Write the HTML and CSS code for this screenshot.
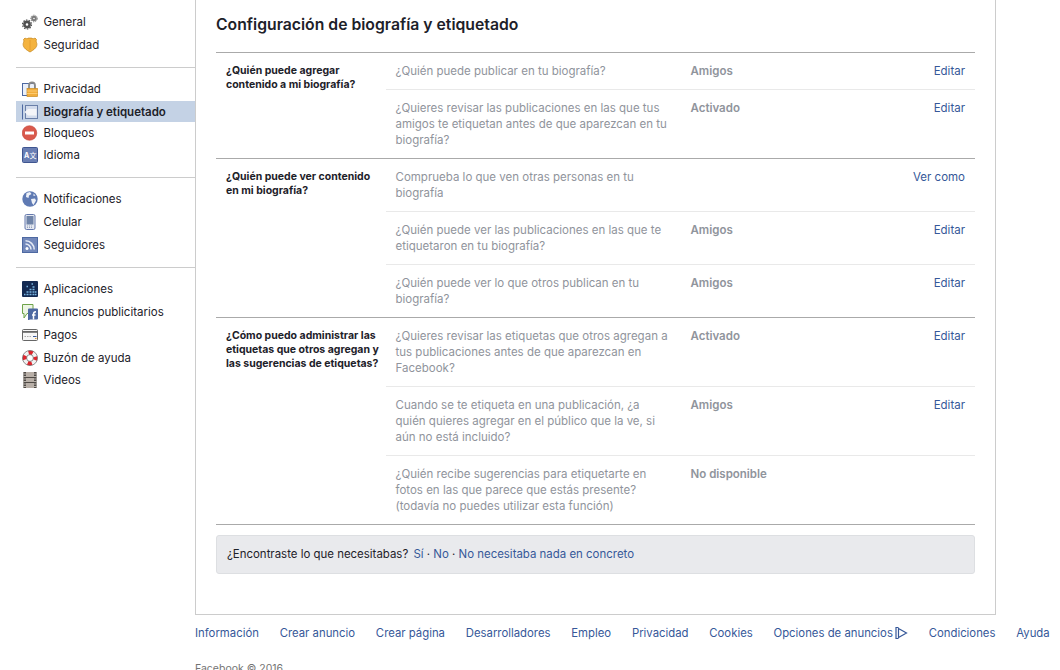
FILE: index.html
```html
<!DOCTYPE html>
<html lang="es">
<head>
<meta charset="utf-8">
<title>Configuración de biografía y etiquetado</title>
<link rel="stylesheet" href="styles.css">
</head>
<body>
<div class="page">
  <div class="layout">
    <nav class="side">
      <ul class="group first">
        <li class="item"><svg class="ic" viewBox="0 0 16 16"><circle cx="5" cy="10.500" r="2.600" fill="none" stroke="#4f4f4f" stroke-width="2.600"/><circle cx="5" cy="10.500" r="4.500" fill="none" stroke="#4f4f4f" stroke-width="1.200" stroke-dasharray="1.500 1.300"/><circle cx="12" cy="4.500" r="1.800" fill="none" stroke="#7b7b7b" stroke-width="2"/><circle cx="12" cy="4.500" r="3.300" fill="none" stroke="#7b7b7b" stroke-width="1" stroke-dasharray="1.300 1.100"/></svg><span>General</span></li>
        <li class="item"><svg class="ic" viewBox="0 0 16 16"><path d="M3 1c1 .8 2 .8 3 .3.800-.4 1.500-.4 2 0 .5-.4 1.200-.4 2 0 1 .5 2 .5 3-.3l1.500 1.500c-.5 1-.5 2 0 3 .5 1.200.5 2.500 0 3.700-.8 2.200-3 3.800-6.500 5.800-3.500-2-5.700-3.600-6.500-5.800-.5-1.200-.5-2.500 0-3.700.5-1 .5-2 0-3z" fill="#f4b33f" stroke="#c98a20" stroke-width=".8"/><path d="M8 3v10" stroke="#e7a232" stroke-width="1.200"/></svg><span>Seguridad</span></li>
      </ul>
      <ul class="group">
        <li class="item priv"><svg class="ic" viewBox="0 0 16 16"><rect x=".5" y="2.500" width="12" height="12" fill="#eaf0fa" stroke="#4e69a2"/><path d="M7 8V4.500a3 3 0 0 1 6 0V8" fill="none" stroke="#8a8a8a" stroke-width="1.800"/><rect x="5" y="7.500" width="10.500" height="8" fill="#f2ae3c" stroke="#c98a20" stroke-width=".7"/><path d="M5 10h10.500M5 12.500h10.500" stroke="#ffd27e" stroke-width=".8"/></svg><span>Privacidad</span></li>
        <li class="item sel active"><svg class="ic" viewBox="0 0 16 16"><path d="M.5 .5v15" stroke="#4e69a2"/><rect x="3.500" y="1.500" width="12" height="13" fill="#d3dcec" stroke="#6a7fa8"/><path d="M2.500 8 6 5h8.500v6.500H6z" fill="#f4f5f8"/></svg><span>Biografía y etiquetado</span></li>
        <li class="item blk"><svg class="ic" viewBox="0 0 16 16"><circle cx="7.500" cy="8" r="7.300" fill="#d9594c" stroke="#c4463a" stroke-width=".6"/><rect x="3" y="6.500" width="9" height="3" fill="#fff"/></svg><span>Bloqueos</span></li>
        <li class="item idm"><svg class="ic" viewBox="0 0 16 16"><rect x=".5" y=".5" width="15" height="15" rx="1" fill="#6a7eb3" stroke="#3f5590"/><text class="lang" x="2" y="10.500">A</text><text class="lang cjk" x="7.500" y="11">文</text></svg><span>Idioma</span></li>
      </ul>
      <ul class="group">
        <li class="item"><svg class="ic" viewBox="0 0 16 16"><circle cx="8" cy="8" r="7.700" fill="#5f7ab3"/><path d="M4.500 2 8 1l1.500 2-2.500 1.500-.5 2.500-2.500-1zM9 8l4-.5 1 2-2.500 4.500-1.500-2zM11.500 2.500l2 2-2 .5z" fill="#eef1f7"/></svg><span>Notificaciones</span></li>
        <li class="item"><svg class="ic" viewBox="0 0 16 16"><rect x="3" y=".5" width="10" height="15" rx="1.500" fill="#e4e8f0" stroke="#6478ad"/><rect x="4.500" y="2" width="7" height="8.500" fill="#6f84a8"/><path d="M5 12h6M5 13.500h6" stroke="#9aa5bd" stroke-dasharray="1 1"/></svg><span>Celular</span></li>
        <li class="item"><svg class="ic" viewBox="0 0 16 16"><rect x=".5" y=".5" width="15" height="15" fill="#7288ba" stroke="#4e69a2"/><circle cx="5" cy="11.500" r="1.500" fill="#fff"/><path d="M3.500 7a5.500 5.500 0 0 1 5.500 5.500M3.500 3.800a8.700 8.700 0 0 1 8.700 8.700" fill="none" stroke="#e6ebf5" stroke-width="1.500"/></svg><span>Seguidores</span></li>
      </ul>
      <ul class="group">
        <li class="item"><svg class="ic" viewBox="0 0 16 16"><rect width="16" height="16" rx="1" fill="#142a52"/><path d="M2 13.500h1.500M4.500 11h2M4.500 13.500h2M7.500 8.500h2M7.500 11h2M7.500 13.500h2M10.500 6h2M10.500 8.500h2M10.500 11h2M10.500 13.500h2M13 11h1.500M13 13.500h1.500M4.500 5.500h1.500M9.500 3h1.500" stroke="#79b4e0" stroke-width="1.500"/></svg><span>Aplicaciones</span></li>
        <li class="item"><svg class="ic" viewBox="0 0 16 16"><path d="M.5 .5h10.500v9h-6l-3 4.500v-4.500H.5z" fill="#edf5e4" stroke="#6ea34a"/><path d="M6 5.500a1 1 0 0 1 1-1h8a1 1 0 0 1 1 1v9a1 1 0 0 1-1 1H8l-2 1z" fill="#4e69a2"/><path d="M11.500 15.500V10c0-1.500.7-2.300 2.500-2.300M10 11h3.500" fill="none" stroke="#fff" stroke-width="1.500"/></svg><span>Anuncios publicitarios</span></li>
        <li class="item"><svg class="ic" viewBox="0 0 16 16"><rect x=".5" y="2.500" width="15" height="11" rx="1" fill="#f6f6f6" stroke="#666"/><rect x="1" y="4" width="14" height="1.800" fill="#666"/><path d="M2.500 9.500h7" stroke="#aaa" stroke-dasharray="1.500 1"/><path d="M11 9.500h3.500" stroke="#3b5998"/><path d="M13 11.500h1.500" stroke="#e0a030"/></svg><span>Pagos</span></li>
        <li class="item"><svg class="ic" viewBox="0 0 16 16"><circle cx="8" cy="8" r="5.400" fill="none" stroke="#f2f2f2" stroke-width="4"/><circle cx="8" cy="8" r="5.400" fill="none" stroke="#e0242c" stroke-width="4" stroke-dasharray="4.240 4.240" stroke-dashoffset="2.120"/><circle cx="8" cy="8" r="7.500" fill="none" stroke="#666" stroke-width=".7"/><circle cx="8" cy="8" r="3.400" fill="none" stroke="#666" stroke-width=".7"/></svg><span>Buzón de ayuda</span></li>
        <li class="item vid"><svg class="ic" viewBox="0 0 16 16"><rect x="1.500" y="0" width="13" height="16" fill="#b8afa7"/><rect x="1.500" y="0" width="2.500" height="16" fill="#4f4a46"/><rect x="12" y="0" width="2.500" height="16" fill="#4f4a46"/><path d="M4 5.500h8M4 10.500h8" stroke="#4f4a46"/><path d="M1.500 2H4M1.500 4.500H4M1.500 7H4M1.500 9.500H4M1.500 12H4M1.500 14.500H4M12 2h2.500M12 4.500h2.500M12 7h2.500M12 9.500h2.500M12 12h2.500M12 14.500h2.500" stroke="#d0cbc5" stroke-width=".8"/></svg><span>Videos</span></li>
      </ul>
    </nav>
    <main class="panel">
      <h1 class="title">Configuración de biografía y etiquetado</h1>
      <section class="sec">
        <h2 class="sec-head">¿Quién puede agregar contenido a mi biografía?</h2>
        <div class="rows">
          <div class="row"><div class="q">¿Quién puede publicar en tu biografía?</div><div class="val">Amigos</div><a class="act">Editar</a></div>
          <div class="row"><div class="q">¿Quieres revisar las publicaciones en las que tus amigos te etiquetan antes de que aparezcan en tu biografía?</div><div class="val">Activado</div><a class="act">Editar</a></div>
        </div>
      </section>
      <section class="sec">
        <h2 class="sec-head">¿Quién puede ver contenido en mi biografía?</h2>
        <div class="rows">
          <div class="row"><div class="q">Comprueba lo que ven otras personas en tu biografía</div><div class="val"></div><a class="act">Ver como</a></div>
          <div class="row"><div class="q">¿Quién puede ver las publicaciones en las que te etiquetaron en tu biografía?</div><div class="val">Amigos</div><a class="act">Editar</a></div>
          <div class="row"><div class="q">¿Quién puede ver lo que otros publican en tu biografía?</div><div class="val">Amigos</div><a class="act">Editar</a></div>
        </div>
      </section>
      <section class="sec">
        <h2 class="sec-head">¿Cómo puedo administrar las etiquetas que otros agregan y las sugerencias de etiquetas?</h2>
        <div class="rows">
          <div class="row"><div class="q">¿Quieres revisar las etiquetas que otros agregan a tus publicaciones antes de que aparezcan en Facebook?</div><div class="val">Activado</div><a class="act">Editar</a></div>
          <div class="row"><div class="q">Cuando se te etiqueta en una publicación, ¿a quién quieres agregar en el público que la ve, si aún no está incluido?</div><div class="val">Amigos</div><a class="act">Editar</a></div>
          <div class="row"><div class="q">¿Quién recibe sugerencias para etiquetarte en fotos en las que parece que estás presente? (todavía no puedes utilizar esta función)</div><div class="val">No disponible</div><a class="act"></a></div>
        </div>
      </section>
      <div class="feedback">¿Encontraste lo que necesitabas? <a class="fb-first">Sí</a> · <a>No</a> · <a>No necesitaba nada en concreto</a></div>
    </main>
  </div>
  <footer class="foot">
    <div class="links">
      <a>Información</a><a>Crear anuncio</a><a>Crear página</a><a>Desarrolladores</a><a>Empleo</a><a>Privacidad</a><a>Cookies</a>
      <a class="adc">Opciones de anuncios<svg class="adi" viewBox="0 0 13 12"><path d="M3.500.5H1v11h2.500" fill="none" stroke="#365899" stroke-width="1.200"/><path d="M3.500 1.500 11.500 6l-8 4.500z" fill="none" stroke="#365899" stroke-width="1.200"/></svg></a>
      <a>Condiciones</a><a>Ayuda</a>
    </div>
    <div class="copy">Facebook © 2016</div>
  </footer>
</div>
</body>
</html>
```
FILE: styles.css
```css
* { box-sizing: border-box; }
html, body { margin: 0; padding: 0; height: 670px; overflow: hidden; background: #fff; }
body { font-family: Inter, "Liberation Sans", sans-serif; font-size: 11.5px; line-height: 16px; color: #1d2129; }
.page { width: 1060px; height: 670px; overflow: hidden; }
.layout { display: flex; align-items: flex-start; }
.side { flex: none; margin-left: 16px; width: 179px; }
.group { list-style: none; margin: 0; padding: 9px 0 11px; border-top: 1px solid #ccc; }
.group.first { border-top: 0; padding-top: 10px; padding-bottom: 11px; }
.group:nth-child(2) { padding-bottom: 12px; }
.item { display: flex; align-items: center; height: 23px; padding-left: 6px; gap: 5.500px; color: #1d2129; }
.item.priv { height: 24px; }
.item.sel { height: 21px; }
.item.blk { height: 22px; }
.item.idm { height: 21px; }
.item.vid { height: 22px; }
.active { background: #c4d2e5; font-weight: 600; }
.ic { width: 16px; height: 16px; flex: none; }
.lang { font-size: 7px; font-weight: 700; fill: #fff; }
.cjk { font-family: "Noto Sans CJK SC", sans-serif; font-weight: 400; }
.panel { width: 801px; height: 615px; padding: 0 20px; border: 1px solid #ccc; border-top: 0; background: #fff; }
.title { margin: 0; padding: 15px 0 0; height: 52px; font-size: 15.75px; line-height: 20px; font-weight: 600; color: #1d2129; }
.sec { display: grid; grid-template-columns: 169.500px 1fr; border-top: 1px solid #aaa; }
.sec-head { margin: 0; padding: 11px 6px 0 10px; font-size: 10.5px; line-height: 14px; font-weight: 700; color: #1d2129; }
.row { display: grid; grid-template-columns: 295px 1fr auto; padding: 10px; border-top: 1px solid #e9e9e9; }
.row:first-child { border-top: 0; }
.q { width: 275px; color: #90949c; }
.val { color: #90949c; font-weight: 600; }
a { color: #365899; }
.feedback { height: 39px; padding: 10px; border: 1px solid #dddfe2; border-radius: 3px; background: #e9eaed; color: #1d2129; font-size: 11.45px; }
.sec:last-of-type { border-bottom: 1px solid #aaa; margin-bottom: 10px; }
.fb-first { margin-left: 2px; }
.foot { margin-left: 195px; padding-top: 10px; }
.links { display: flex; gap: 20.750px; white-space: nowrap; font-size: 11.35px; }
.adc { display: flex; align-items: center; gap: 2px; }
.adi { width: 13px; height: 12px; }
.copy { margin-top: 20px; color: #737373; font-size: 10.5px; }
```
